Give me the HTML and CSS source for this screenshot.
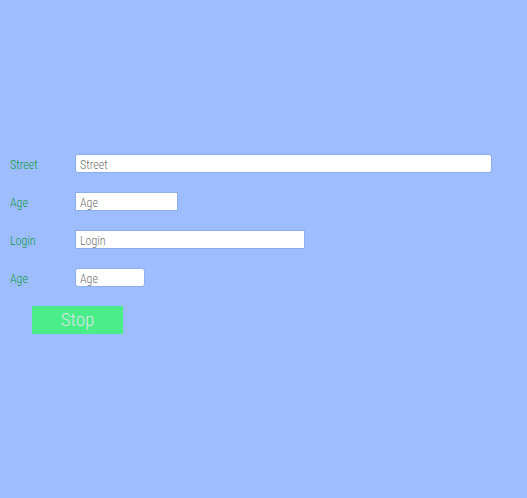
FILE: index.html
```
<!DOCTYPE html>
<html lang="en">
<head>
<meta charset="utf-8">
<meta name="viewport" content="width=device-width, initial-scale=1">
<title>Form</title>
<link rel="stylesheet" href="styles.css">
</head>
<body>
<form class="form">
  <div class="row">
    <label class="label" for="street">Street</label>
    <input class="field field-rounded" id="street" type="text" placeholder="Street">
  </div>
  <div class="row">
    <label class="label" for="age">Age</label>
    <input class="field field-medium" id="age" type="text" placeholder="Age">
  </div>
  <div class="row">
    <label class="label" for="login">Login</label>
    <input class="field field-wide" id="login" type="text" placeholder="Login">
  </div>
  <div class="row">
    <label class="label" for="age-second">Age</label>
    <input class="field field-small field-rounded" id="age-second" type="text" placeholder="Age">
  </div>
  <button class="stop" type="button">Stop</button>
</form>
</body>
</html>
```
FILE: styles.css
```
* {
  box-sizing: border-box;
}

body {
  margin: 0;
  background: #9dbdff;
  font-family: "Roboto Condensed", "Roboto", "Liberation Sans", sans-serif;
  font-size: 12px;
  font-weight: 300;
}

.form {
  display: flex;
  flex-direction: column;
  gap: 19px;
  padding: 154px 35px 0 10px;
}

.row {
  display: grid;
  grid-template-columns: 65px 1fr;
  align-items: center;
}

.label {
  padding-top: 2px;
  color: #0f9a3c;
  line-height: 16px;
}

.field {
  width: 100%;
  height: 19px;
  padding: 2px 4px 0;
  border: 1px solid #8daeee;
  background: #fff;
  color: #555;
  font: inherit;
  line-height: 16px;
}

.field::placeholder {
  color: #707070;
  opacity: 1;
}

.field-rounded {
  border-radius: 3px;
}

.field-small {
  width: 70px;
}

.field-medium {
  width: 103px;
}

.field-wide {
  width: 230px;
}

.stop {
  align-self: flex-start;
  width: 91px;
  height: 28px;
  margin-left: 22px;
  padding: 0;
  border: 0;
  background: #4aee88;
  color: #dbe2e8;
  font: inherit;
  font-size: 19px;
  line-height: 28px;
}
```
